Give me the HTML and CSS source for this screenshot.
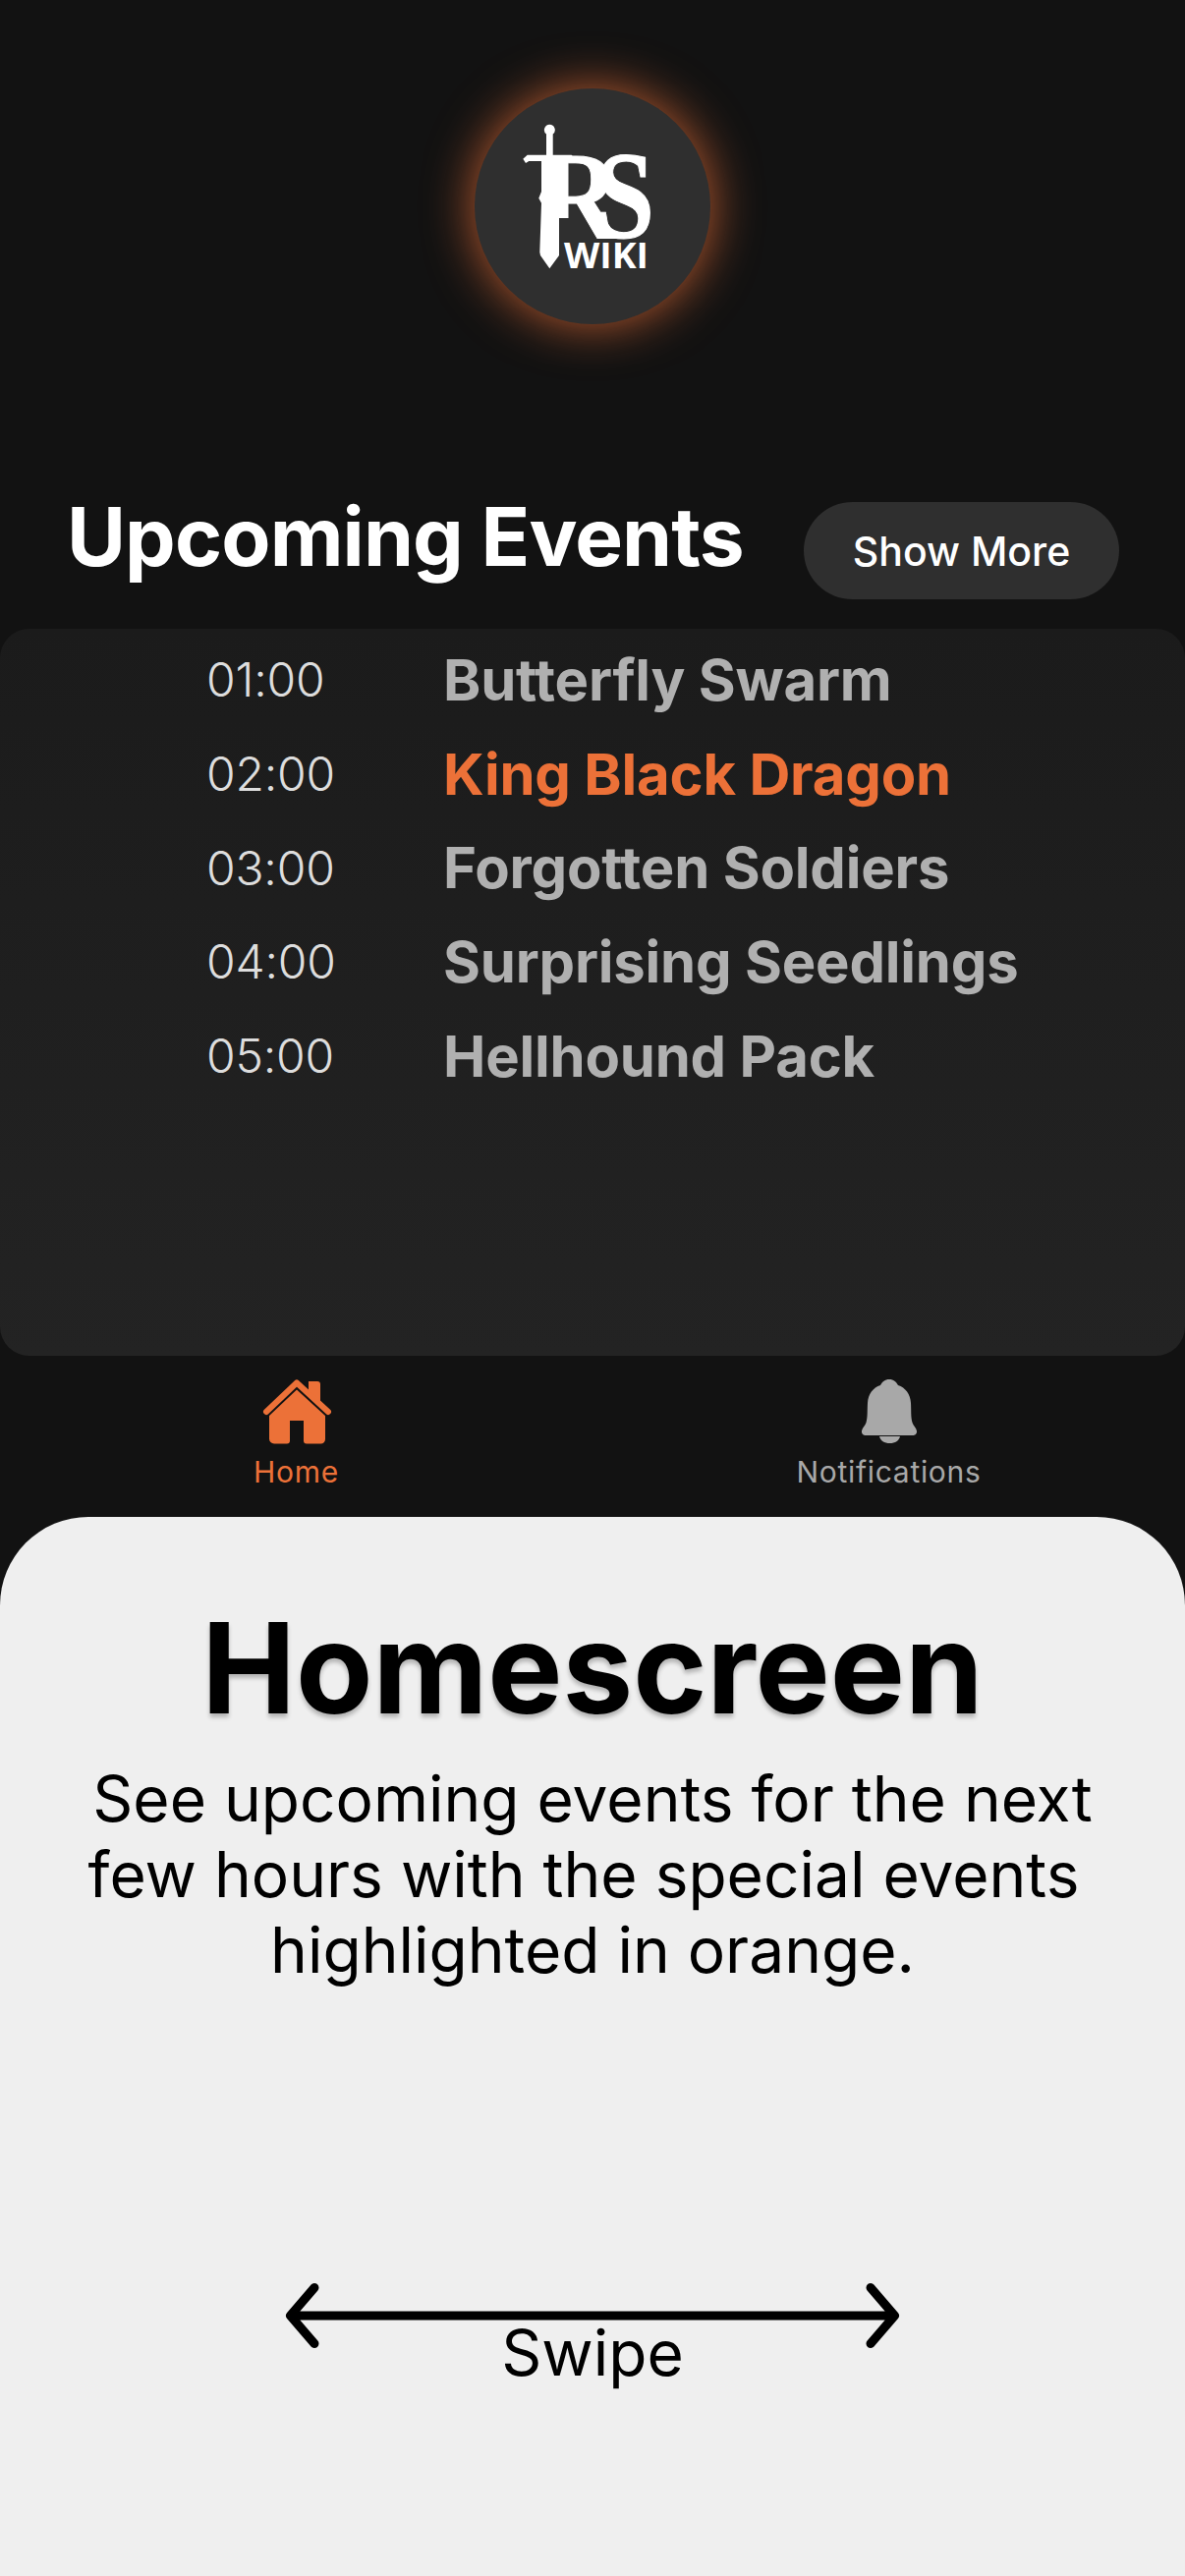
FILE: index.html
```html
<!DOCTYPE html>
<html lang="en">
<head>
<meta charset="utf-8">
<title>RS Wiki Homescreen</title>
<link rel="stylesheet" href="styles.css">
</head>
<body>
<div class="page">
  <header class="logo-wrap">
    <div class="logo">
      <svg class="logo-svg" viewBox="0 0 240 240" width="240" height="240">
        <defs>
          <clipPath id="rclip"><path d="M80 55H200V165H112V132H80Z"/></clipPath>
        </defs>
        <g clip-path="url(#rclip)">
          <text class="logo-rs" x="66" y="152" textLength="82" lengthAdjust="spacingAndGlyphs">R</text>
        </g>
        <text class="logo-rs" x="123" y="152" textLength="60" lengthAdjust="spacingAndGlyphs">S</text>
        <path class="logo-sword" d="M76.300 36.800a5.500 5.500 0 0 1 3.400 9.800V67.700H98.700L103.700 74 101 75.500 97 72.800 86 73.300V170L76.300 183.300 67 170 66.300 166.700 68 116.700 65.300 111.700 68 105V74H55.300L52 76 49.300 71.700 53.700 67.700H73V46.600A5.500 5.500 0 0 1 76.300 36.800Z"/>
        <text class="logo-wiki" x="91" y="183" textLength="86" lengthAdjust="spacingAndGlyphs">WIKI</text>
      </svg>
    </div>
  </header>

  <section class="title-row">
    <h1 class="title">Upcoming Events</h1>
    <button class="more">Show More</button>
  </section>

  <section class="panel">
    <div class="row"><span class="time">01:00</span><span class="name">Butterfly Swarm</span></div>
    <div class="row"><span class="time">02:00</span><span class="name special">King Black Dragon</span></div>
    <div class="row"><span class="time">03:00</span><span class="name">Forgotten Soldiers</span></div>
    <div class="row"><span class="time">04:00</span><span class="name">Surprising Seedlings</span></div>
    <div class="row"><span class="time">05:00</span><span class="name">Hellhound Pack</span></div>
  </section>

  <nav class="tabs">
    <div class="tab active">
      <svg class="tab-icon" viewBox="0 0 72 72" width="72" height="72">
        <path class="house-fill" d="M48 6h9a3 3 0 0 1 3 3v18l-12-11z"/>
        <path class="house-roof" d="M5 37 36 7.500 68 37"/>
        <path class="house-fill" d="M36 14.500 65 41v24a4.500 4.500 0 0 1-4.500 4.500H46a3 3 0 0 1-3-3V46H29v20.500a3 3 0 0 1-3 3H13a5 5 0 0 1-5-5V41z"/>
      </svg>
      <span class="tab-label">Home</span>
    </div>
    <div class="tab">
      <svg class="tab-icon" viewBox="0 0 68 72" width="68" height="72">
        <path class="bell-fill" d="M34 4c-4.500 0-7 2.500-9 6-7.500 2.500-12.500 9-13 18-.5 8 .2 14-1.500 20-1 3-4 5.500-4.500 8.500-.3 2.300 1 4.500 4 4.500h48c3 0 4.300-2.200 4-4.500-.5-3-3.500-5.500-4.500-8.500-1.700-6-1-12-1.500-20-.5-9-5.500-15.500-13-18-2-3.500-4.500-6-9-6z"/>
        <path class="bell-fill" d="M24 62h21c-1 4.500-5 7-10.500 7S25 66.500 24 62z"/>
      </svg>
      <span class="tab-label">Notifications</span>
    </div>
  </nav>

  <section class="sheet">
    <h2 class="sheet-title">Homescreen</h2>
    <p class="sheet-text">See upcoming events for the next<br>few hours with the special events&nbsp;<br>highlighted in orange.</p>
    <div class="swipe">
      <svg class="swipe-arrow" viewBox="0 0 634 74" width="634" height="74">
        <path class="arrow-line" d="M9.500 37H624.500M34 8.500 9.500 37 34 65.500M600 8.500 624.500 37 600 65.500"/>
      </svg>
      <span class="swipe-label">Swipe</span>
    </div>
  </section>
</div>
</body>
</html>
```

FILE: styles.css
```css
* { box-sizing: border-box; }
html, body { margin: 0; padding: 0; }
body { background: #111111; font-family: "Inter", "Liberation Sans", sans-serif; }
.page { width: 1206px; height: 2622px; display: flex; flex-direction: column; overflow: hidden; background: #121212; }

.logo-wrap { display: flex; justify-content: center; padding-top: 90px; height: 511px; }
.logo { width: 240px; height: 240px; border-radius: 50%; background: #2f2f2f; box-shadow: 0 0 50px 0 rgba(236, 113, 56, 0.8); }
.logo-svg { display: block; }
.logo-rs { font-family: "Liberation Serif", serif; font-weight: 700; font-size: 128px; fill: #ffffff; stroke: #ffffff; stroke-width: 1; }
.logo-wiki { font-family: "Open Sans", sans-serif; font-weight: 700; font-size: 35px; fill: #ffffff; }
.logo-sword { fill: #ffffff; }

.title-row { display: flex; align-items: flex-start; height: 99px; padding-left: 68px; }
.title { margin: 0; width: 750px; font-size: 82px; font-weight: 700; letter-spacing: -0.9px; color: #ffffff; line-height: 72px; white-space: nowrap; }
.more { width: 321px; height: 99px; border: 0; border-radius: 50px; background: #2f2f2f; color: #ffffff; font-family: inherit; font-size: 41px; font-weight: 500; padding: 0; }

.panel { margin-top: 30px; height: 740px; padding: 4px 0 0 210px; border-radius: 30px; background: linear-gradient(#1b1b1b, #232323); }
.row { display: grid; grid-template-columns: 241px 1fr; align-items: center; height: 95.7px; }
.time { font-size: 48px; font-weight: 300; letter-spacing: -0.2px; color: #dddddd; }
.name { font-size: 58px; font-weight: 700; letter-spacing: -0.2px; color: #b0b0b0; white-space: nowrap; }
.special { color: #ec7138; }

.tabs { display: grid; grid-template-columns: 1fr 1fr; height: 164px; padding-top: 20px; }
.tab { display: flex; flex-direction: column; align-items: center; color: #a8a8a8; }
.tab.active { color: #ec7138; }
.tab-icon { display: block; }
.tab-label { font-size: 30px; font-weight: 400; letter-spacing: 0.7px; line-height: 36px; margin-top: 8px; }
.house-fill { fill: #ec7138; }
.house-roof { fill: none; stroke: #ec7138; stroke-width: 6; stroke-linecap: round; stroke-linejoin: round; }
.bell-fill { fill: #a8a8a8; }

.sheet { flex: 1; display: flex; flex-direction: column; align-items: center; background: #efefef; border-radius: 90px 90px 0 0; padding-top: 76px; color: #000000; }
.sheet-title { margin: 0; font-size: 128px; line-height: 156px; font-weight: 700; text-shadow: 0 4px 4px rgba(0, 0, 0, 0.25); }
.sheet-text { margin: 16px 0 0; font-size: 64px; line-height: 77px; font-weight: 400; text-align: center; white-space: nowrap; }
.swipe { margin-top: 297px; display: flex; flex-direction: column; align-items: center; }
.swipe-arrow { display: block; }
.arrow-line { fill: none; stroke: #000000; stroke-width: 9; stroke-linecap: round; stroke-linejoin: round; }
.swipe-label { font-size: 64px; line-height: 77px; margin-top: -38px; }
```
